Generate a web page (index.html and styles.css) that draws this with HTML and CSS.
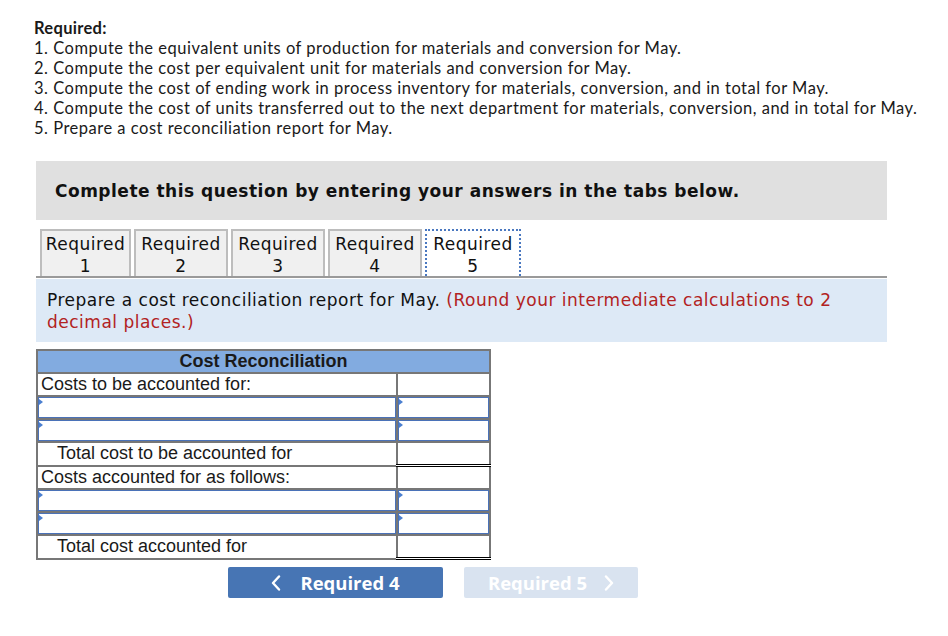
FILE: index.html
```html
<!DOCTYPE html>
<html>
<head>
<meta charset="utf-8">
<link rel="stylesheet" href="styles.css">
</head>
<body>
<div class="page">
  <div class="required">
    <div class="req-title">Required:</div>
    <div>1. Compute the equivalent units of production for materials and conversion for May.</div>
    <div>2. Compute the cost per equivalent unit for materials and conversion for May.</div>
    <div>3. Compute the cost of ending work in process inventory for materials, conversion, and in total for May.</div>
    <div>4. Compute the cost of units transferred out to the next department for materials, conversion, and in total for May.</div>
    <div>5. Prepare a cost reconciliation report for May.</div>
  </div>

  <div class="complete-box">Complete this question by entering your answers in the tabs below.</div>

  <div class="tabs">
    <div class="tab tab-first">Required<br>1</div>
    <div class="tab">Required<br>2</div>
    <div class="tab">Required<br>3</div>
    <div class="tab">Required<br>4</div>
    <div class="tab tab-active">Required<br>5</div>
  </div>

  <div class="info">
    <div>Prepare a cost reconciliation report for May. <span class="hint">(Round your intermediate calculations to 2</span></div>
    <div class="hint">decimal places.)</div>
  </div>

  <table class="recon">
    <colgroup><col class="col-label"><col class="col-amt"></colgroup>
    <tr><th colspan="2">Cost Reconciliation</th></tr>
    <tr><td class="label">Costs to be accounted for:</td><td class="amt"></td></tr>
    <tr><td class="in-cell"><div class="input"></div></td><td class="in-cell"><div class="input"></div></td></tr>
    <tr><td class="in-cell"><div class="input"></div></td><td class="in-cell"><div class="input"></div></td></tr>
    <tr><td class="label total">Total cost to be accounted for</td><td class="amt total-amt"></td></tr>
    <tr><td class="label">Costs accounted for as follows:</td><td class="amt"></td></tr>
    <tr><td class="in-cell"><div class="input"></div></td><td class="in-cell"><div class="input"></div></td></tr>
    <tr><td class="in-cell"><div class="input"></div></td><td class="in-cell"><div class="input"></div></td></tr>
    <tr><td class="label total">Total cost accounted for</td><td class="amt total-amt"></td></tr>
  </table>

  <div class="nav">
    <div class="btn btn-prev">
      <svg class="chev" width="10" height="16" viewBox="0 0 10 16"><path d="M8 1.5 L2 8 L8 14.5" fill="none" stroke="#ffffff" stroke-width="2.4" stroke-linecap="round" stroke-linejoin="round"/></svg>
      <span>Required 4</span>
    </div>
    <div class="btn btn-next">
      <span>Required 5</span>
      <svg class="chev chev-r" width="10" height="16" viewBox="0 0 10 16"><path d="M2 1.5 L8 8 L2 14.5" fill="none" stroke="#ffffff" stroke-width="2.4" stroke-linecap="round" stroke-linejoin="round"/></svg>
    </div>
  </div>
</div>
</body>
</html>
```

FILE: styles.css
```css
html, body {
  margin: 0;
  padding: 0;
  background: #ffffff;
}

.page {
  width: 948px;
  height: 636px;
  position: relative;
  color: #111;
}

.required {
  padding: 18px 0 0 34px;
  font-family: "Lato", "Open Sans", sans-serif;
  font-size: 16.5px;
  letter-spacing: 0.5px;
  line-height: 20px;
  color: #1a1a1a;
}

.req-title {
  font-weight: 700;
  letter-spacing: 0.3px;
}

.complete-box {
  margin: 23px 0 0 36px;
  width: 851px;
  height: 59px;
  box-sizing: border-box;
  background: #e0e0e0;
  display: flex;
  align-items: center;
  padding-left: 19px;
  font-family: "DejaVu Sans", Verdana, sans-serif;
  font-weight: 700;
  font-size: 17px;
  letter-spacing: 0.5px;
  color: #111;
}

.tabs {
  margin: 9px 0 0 36px;
  width: 851px;
  box-sizing: border-box;
  padding-left: 4px;
  display: flex;
  gap: 3px;
  border-bottom: 2px solid #9a9a9a;
  font-family: "DejaVu Sans", Verdana, sans-serif;
  font-size: 17px;
  letter-spacing: 0.5px;
  line-height: 22px;
}

.tab {
  width: 94px;
  height: 47px;
  box-sizing: border-box;
  background: #f0f0f0;
  border: 2px solid #bdbdbd;
  border-bottom: none;
  text-align: center;
  padding-top: 2px;
  color: #111;
  white-space: nowrap;
}

.tab-first {
  width: 91px;
}

.tab-active {
  width: 96px;
  background: #ffffff;
  border: 2px dotted #4a78c0;
  border-bottom: none;
}

.info {
  margin: 1px 0 0 36px;
  width: 851px;
  box-sizing: border-box;
  background: #dde9f6;
  padding: 10px 20px 9px 11px;
  font-family: "DejaVu Sans", Verdana, sans-serif;
  font-size: 17px;
  letter-spacing: 0.5px;
  line-height: 22px;
  color: #111;
}

.hint {
  color: #b22222;
}

.recon {
  margin: 7px 0 0 36px;
  width: 453px;
  table-layout: fixed;
  border-collapse: collapse;
  font-family: "Liberation Sans", Arial, sans-serif;
  font-size: 18px;
  border: 2px solid #777;
}

.col-label {
  width: 360px;
}

.col-amt {
  width: 93px;
}

.recon th {
  background: #82abe0;
  height: 21px;
  padding: 0;
  font-weight: 700;
  font-size: 18px;
  line-height: 19px;
  text-align: center;
  border: 2px solid #777;
  color: #1a1a1a;
}

.recon td {
  border: 2px solid #777;
  padding: 0;
  height: 21px;
}

.recon td.label {
  padding-left: 3px;
  color: #1a1a1a;
  line-height: 19px;
  white-space: nowrap;
}

.recon td.total {
  padding-left: 19px;
}

.recon td.total-amt {
  border-top: 2px solid #000;
  border-bottom: 3px double #000;
}

.recon td.in-cell {
  padding: 0;
}

.input {
  position: relative;
  height: 19px;
  border: 1px solid #4a72b8;
  background: #fff;
}

.input::before {
  content: "";
  position: absolute;
  left: 0;
  top: 1px;
  border-top: 3px solid transparent;
  border-bottom: 3px solid transparent;
  border-left: 4px solid #4a7fd0;
}

.nav {
  margin: 7px 0 0 228px;
  display: flex;
  gap: 21px;
  font-family: "Open Sans", "Lato", sans-serif;
  font-weight: 700;
  font-size: 18.5px;
}

.btn {
  height: 31px;
  border-radius: 2px;
  display: flex;
  align-items: center;
  justify-content: center;
  color: #ffffff;
  box-sizing: border-box;
}

.btn-prev {
  width: 215px;
  background: #4775b4;
}

.btn-next {
  width: 174px;
  background: #d9e3f0;
}

.chev {
  display: block;
  margin-right: 19px;
}

.chev-r {
  margin-right: 0;
  margin-left: 17px;
}
```
